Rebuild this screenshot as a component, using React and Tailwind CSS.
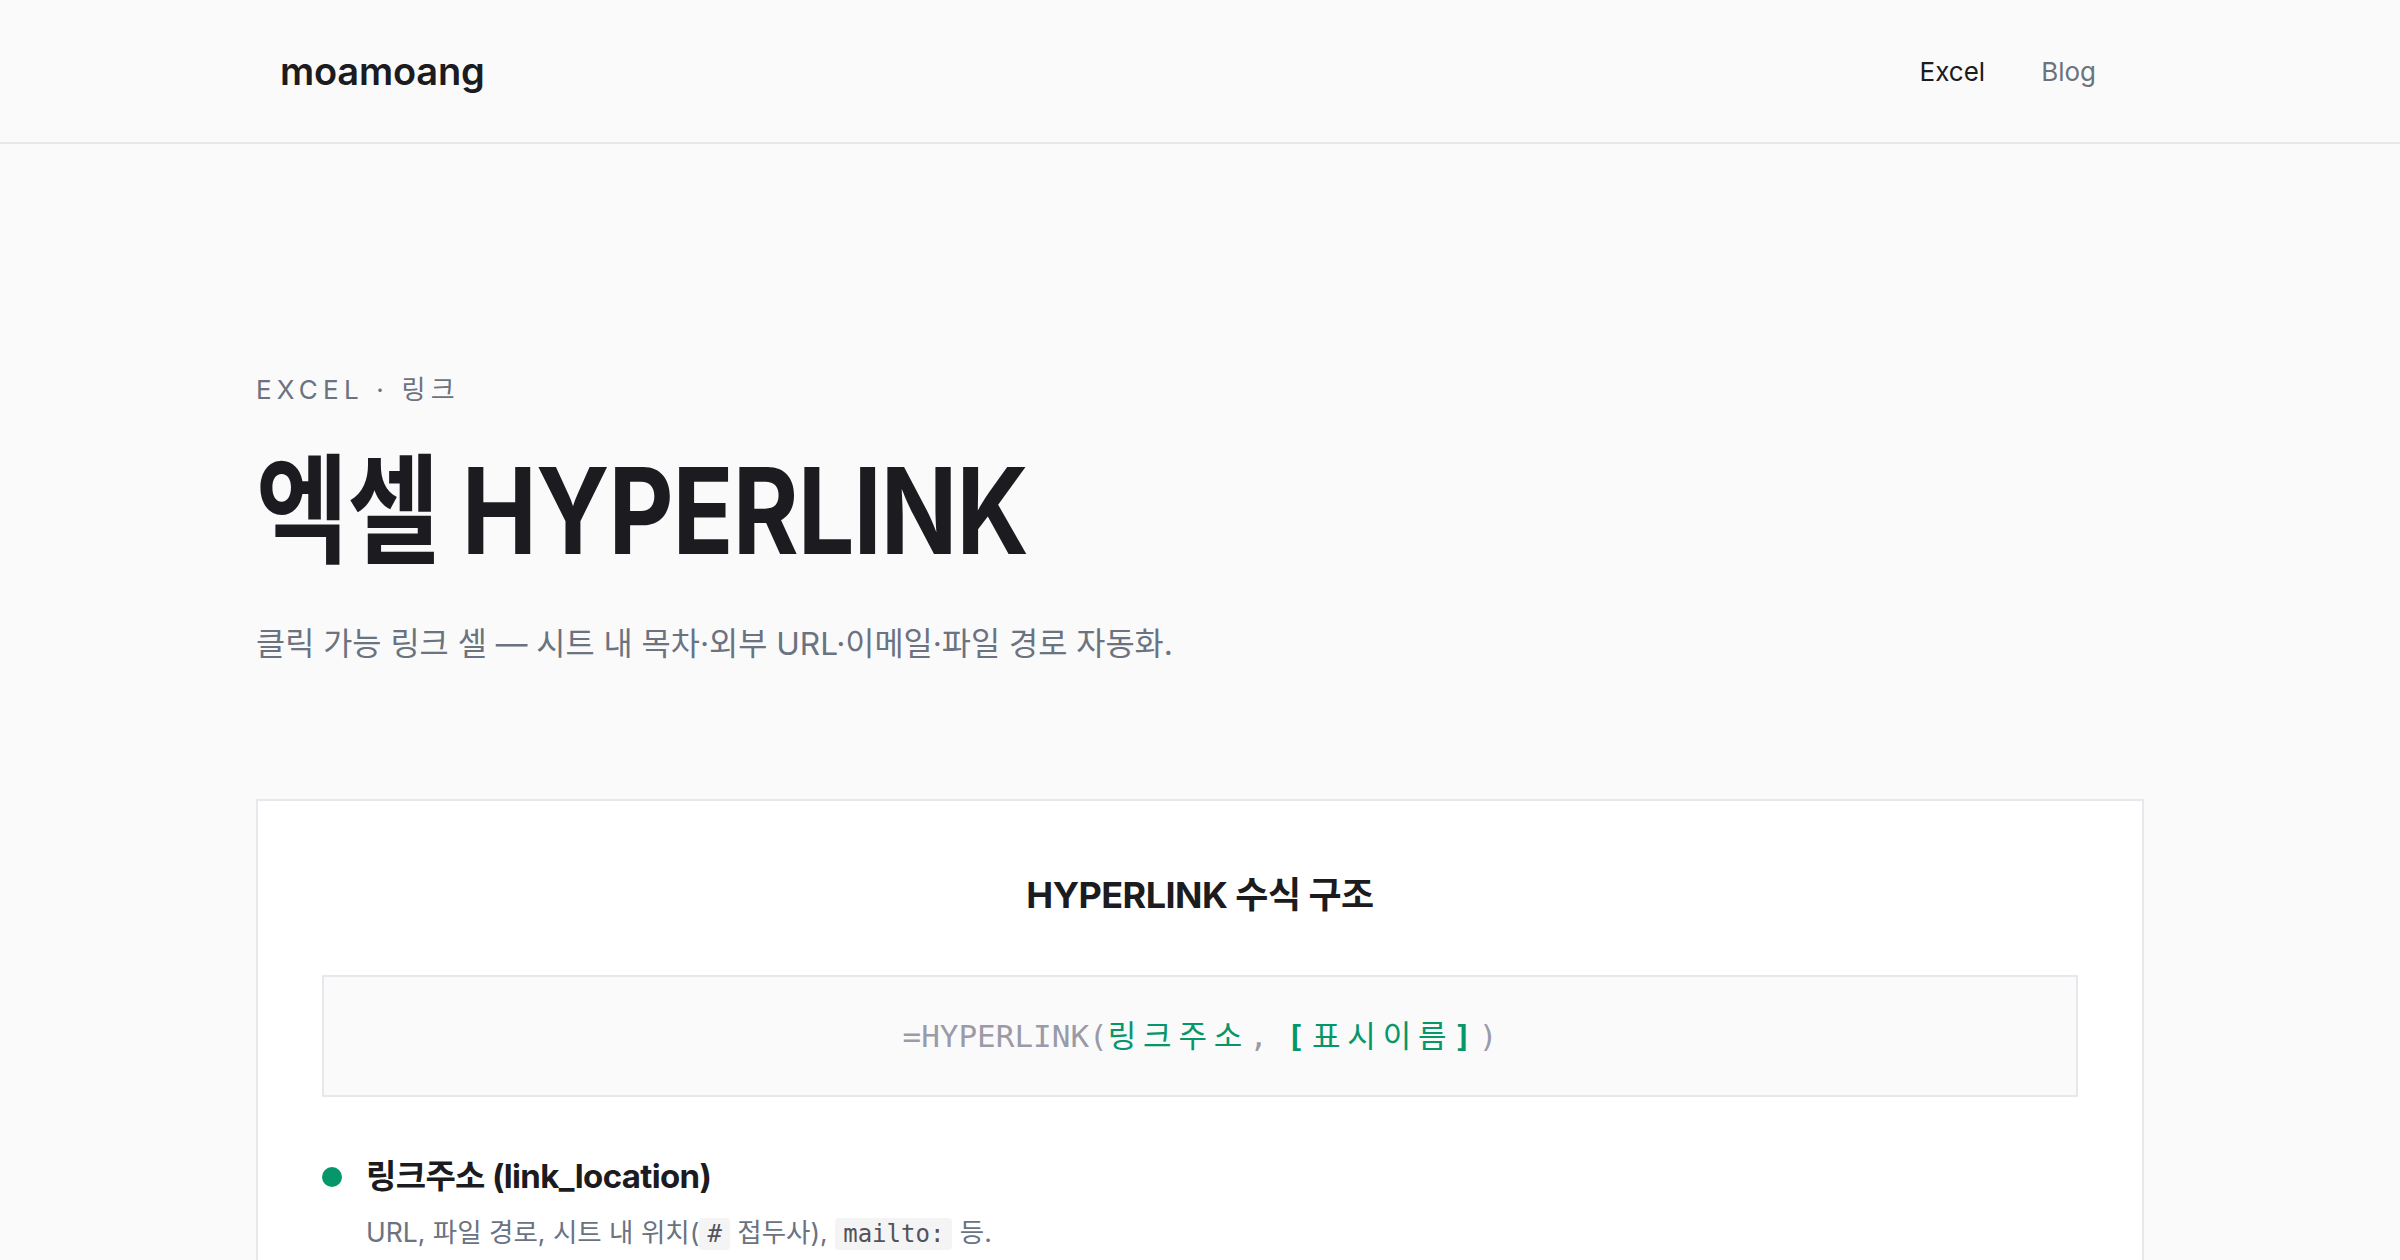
const sans = "font-['Inter','Noto_Sans_CJK_KR',sans-serif]";
const mono = "font-['DejaVu_Sans_Mono','Noto_Sans_CJK_KR',monospace]";

function Header() {
  return (
    <header className="h-[144px] border-b-2 border-[#e8e8ec] bg-[#fafafa]">
      <div className="mx-auto flex h-full max-w-[1888px] items-center justify-between pl-6 pr-12">
        <a href="#" className="text-[38px] font-semibold tracking-[-0.005em] text-[#1b1b20]">
          moamoang
        </a>
        <nav className="flex items-center gap-14 text-[26px]">
          <a href="#" className="text-[#1b1b20]">Excel</a>
          <a href="#" className="text-[#6b7280]">Blog</a>
        </nav>
      </div>
    </header>
  );
}

function Code({ children }) {
  return (
    <code className={`${mono} rounded bg-[#f4f4f5] px-2 py-0.5 text-[24px] text-[#52525b]`}>
      {children}
    </code>
  );
}

function FormulaCard() {
  return (
    <section className="border-2 border-[#e7e7ec] bg-white px-16 pt-[71px] pb-16">
      <h2 className="text-center text-[36px] font-bold leading-[1.3] tracking-[-0.015em] text-[#1b1b20]">
        HYPERLINK 수식 구조
      </h2>

      <div className="mt-14 flex h-[122px] items-center justify-center border-2 border-[#e7e7ec] bg-[#fafafa]">
        <p className={`${mono} text-[31px] text-[#9a9aa8]`}>
          =HYPERLINK(
          <span className="tracking-[0.22em] text-[#059669]">링크주소</span>
          ,{" "}
          <span className="tracking-[0.22em] text-[#059669]">
            <b className="font-bold">[</b>표시이름<b className="font-bold">]</b>
          </span>
          )
        </p>
      </div>

      <ul className="mt-14 flex flex-col gap-10">
        <li className="flex gap-6">
          <span className="mt-[14px] h-5 w-5 shrink-0 rounded-full bg-[#059669]" />
          <div>
            <h3 className="text-[33px] font-bold leading-[1.4] tracking-[-0.02em] text-[#1b1b20]">
              링크주소 (link_location)
            </h3>
            <p className="mt-3 text-[26.5px] leading-[1.6] text-[#6b7280]">
              URL, 파일 경로, 시트 내 위치(<Code>#</Code> 접두사), <Code>mailto:</Code> 등.
            </p>
          </div>
        </li>
      </ul>
    </section>
  );
}

export default function App() {
  return (
    <div className={`${sans} min-h-screen bg-[#fafafa]`}>
      <Header />
      <main className="mx-auto max-w-[1888px] pt-[230px] pb-24">
        <p className="text-[26px] leading-[1.2] tracking-[0.2em] text-[#6b7280]">EXCEL · 링크</p>
        {/* display face is condensed; squeeze Inter to the same measure */}
        <h1 className="mt-10 origin-left scale-x-[0.845] text-[119px] font-bold leading-[1.12] tracking-[-0.01em] text-[#1b1b20]">
          엑셀 HYPERLINK
        </h1>
        <p className="mt-[42px] text-[31.7px] leading-[1.5] text-[#6b7280]">
          클릭 가능 링크 셀 — 시트 내 목차·외부 URL·이메일·파일 경로 자동화.
        </p>
        <div className="mt-[131px]">
          <FormulaCard />
        </div>
      </main>
    </div>
  );
}
